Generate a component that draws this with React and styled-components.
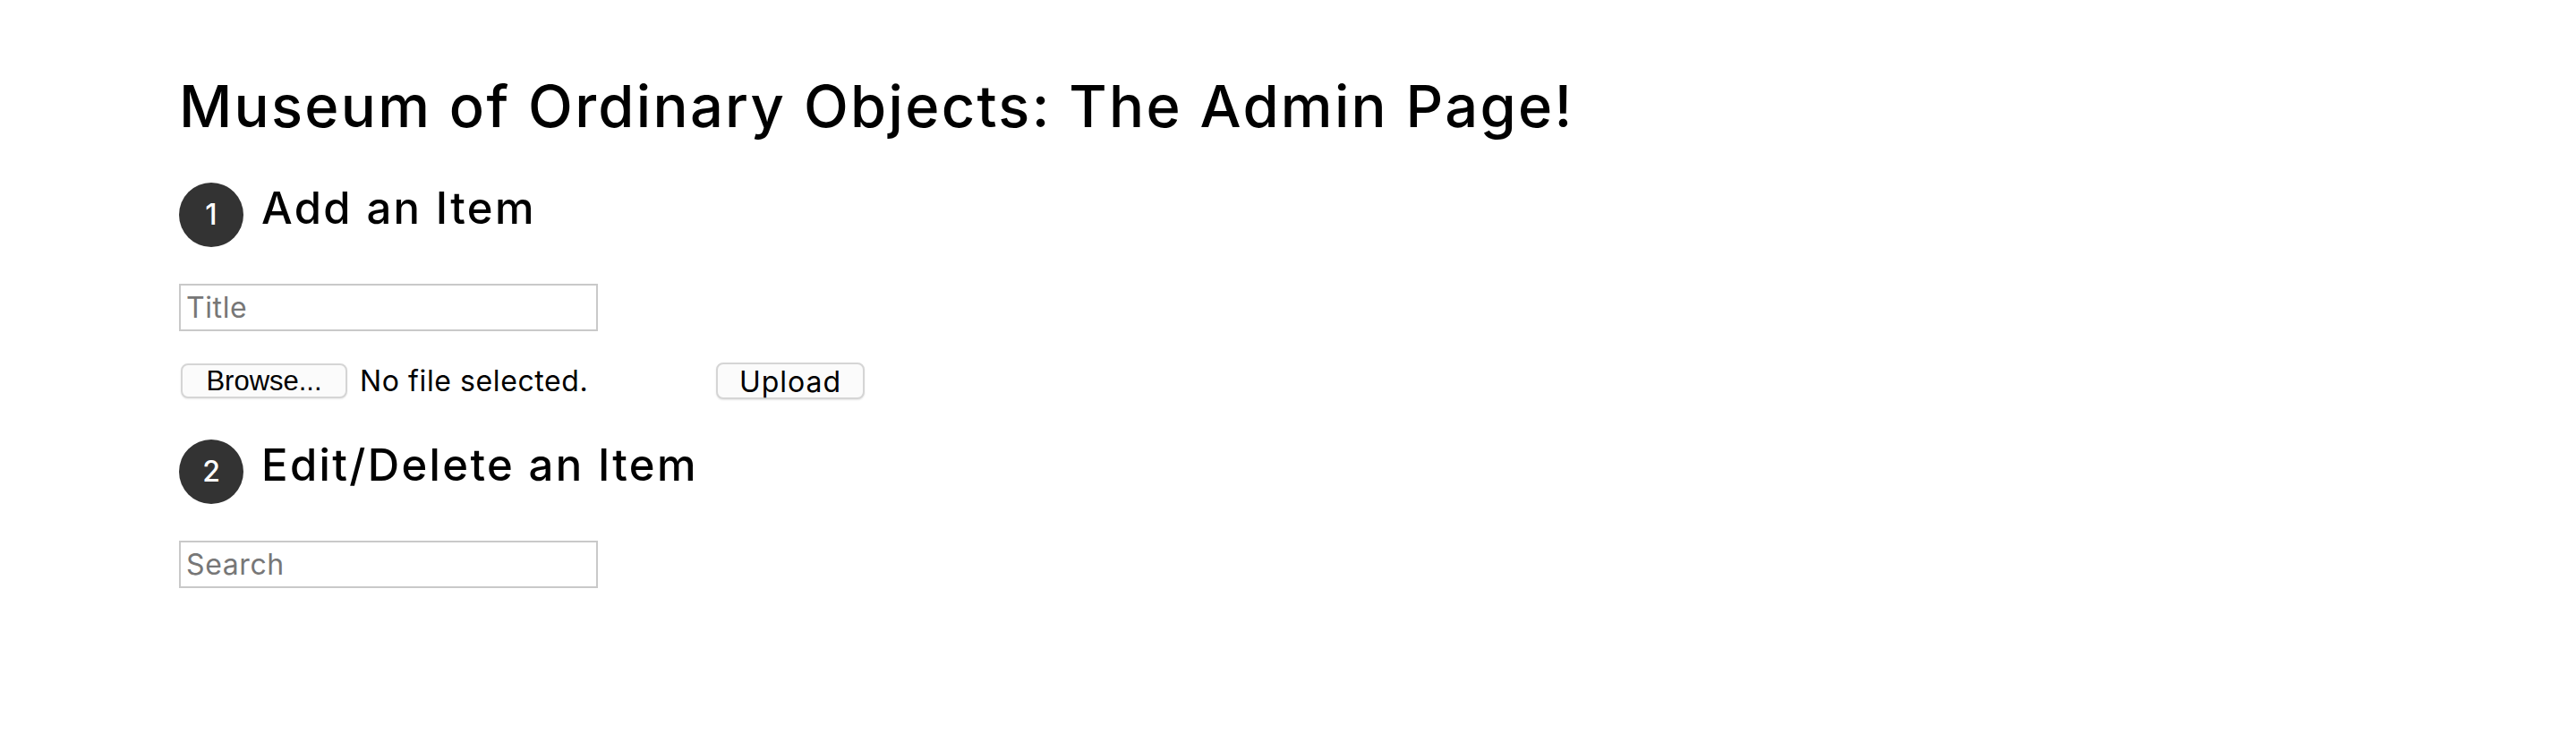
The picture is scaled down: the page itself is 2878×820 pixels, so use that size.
import React from "react";
import styled, { createGlobalStyle } from "styled-components";

const GlobalStyle = createGlobalStyle`
  html, body {
    margin: 0;
    padding: 0;
    background: #ffffff;
  }
  body {
    font-family: "Inter", "Noto Sans", sans-serif;
    color: #000;
  }
  * { box-sizing: border-box; }
`;

const Page = styled.main`
  display: flex;
  flex-direction: column;
  align-items: flex-start;
  padding: 80px 200px 0;
`;

const Title = styled.h1`
  margin: 0 0 46px;
  font-size: 65px;
  font-weight: 500;
  line-height: 78px;
  letter-spacing: 2.3px;
`;

const Section = styled.section`
  display: flex;
  flex-direction: column;
  align-items: flex-start;
  margin-bottom: ${(p) => p.$after}px;
`;

const SectionHeader = styled.div`
  display: flex;
  align-items: center;
  gap: 20px;
  margin-bottom: 41px;
`;

const StepBadge = styled.span`
  display: flex;
  align-items: center;
  justify-content: center;
  width: 72px;
  height: 72px;
  border-radius: 50%;
  background: #333333;
  color: #ffffff;
  font-size: 32px;
  font-weight: 500;
  line-height: 1;
`;

const SectionTitle = styled.h2`
  margin: 0;
  padding-bottom: 14px;
  font-size: 49px;
  font-weight: 500;
  line-height: 58px;
  letter-spacing: 2.35px;
`;

const TextInput = styled.input`
  width: 468px;
  height: 53px;
  padding: 0 6px;
  border: 2px solid #c9c9c9;
  border-radius: 0;
  font-family: inherit;
  font-size: 32px;
  letter-spacing: 0.6px;
  color: #000;
  outline: none;
  &::placeholder {
    color: #777777;
    opacity: 1;
  }
`;

const FileRow = styled.div`
  display: flex;
  align-items: center;
  margin-top: 35px;
`;

const FileField = styled.label`
  display: flex;
  align-items: center;
  gap: 14px;
  width: 600px;
`;

const BrowseButton = styled.span`
  display: flex;
  align-items: center;
  justify-content: center;
  width: 186px;
  height: 39px;
  margin-left: 2px;
  background: #fbfbfb;
  border: 2px solid #d5d5d5;
  border-radius: 8px;
  box-shadow: 0 1px 2px rgba(0, 0, 0, 0.08);
  font-family: "Liberation Sans", Arial, sans-serif;
  font-size: 31px;
  color: #000;
`;

const FileName = styled.span`
  font-size: 32px;
  letter-spacing: 0.6px;
`;

const UploadButton = styled.button`
  width: 166px;
  height: 41px;
  padding: 0;
  background: #fbfbfb;
  border: 2px solid #d5d5d5;
  border-radius: 8px;
  box-shadow: 0 1px 2px rgba(0, 0, 0, 0.1);
  font-family: inherit;
  font-size: 32px;
  letter-spacing: 1px;
  color: #000;
  cursor: pointer;
`;

export default function App() {
  return (
    <>
      <GlobalStyle />
      <Page>
        <Title>Museum of Ordinary Objects: The Admin Page!</Title>

        <Section $after={45}>
          <SectionHeader>
            <StepBadge>1</StepBadge>
            <SectionTitle>Add an Item</SectionTitle>
          </SectionHeader>
          <TextInput type="text" placeholder="Title" />
          <FileRow>
            <FileField>
              <BrowseButton>Browse...</BrowseButton>
              <FileName>No file selected.</FileName>
            </FileField>
            <UploadButton type="button">Upload</UploadButton>
          </FileRow>
        </Section>

        <Section $after={0}>
          <SectionHeader>
            <StepBadge>2</StepBadge>
            <SectionTitle>Edit/Delete an Item</SectionTitle>
          </SectionHeader>
          <TextInput type="text" placeholder="Search" />
        </Section>
      </Page>
    </>
  );
}
